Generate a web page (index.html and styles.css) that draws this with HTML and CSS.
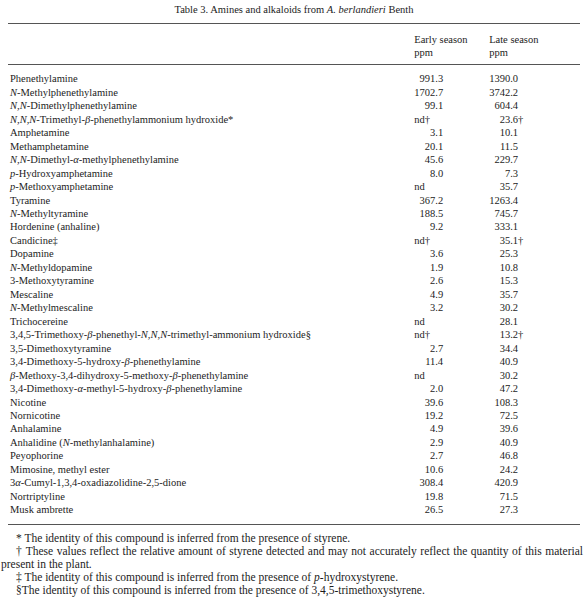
FILE: index.html
```html
<!DOCTYPE html>
<html>
<head>
<meta charset="utf-8">
<link rel="stylesheet" href="styles.css">
</head>
<body>
<div class="page">
  <p class="caption">Table 3. Amines and alkaloids from <i>A. berlandieri</i> Benth</p>
  <table class="data">
    <thead>
      <tr>
        <th class="name"></th>
        <th class="early">Early season<br>ppm</th>
        <th class="late">Late season<br>ppm</th>
      </tr>
    </thead>
    <tbody>
      <tr><td class="name">Phenethylamine</td><td class="early">991.3</td><td class="late">1390.0</td></tr>
      <tr><td class="name"><i>N</i>-Methylphenethylamine</td><td class="early">1702.7</td><td class="late">3742.2</td></tr>
      <tr><td class="name"><i>N</i>,<i>N</i>-Dimethylphenethylamine</td><td class="early">99.1</td><td class="late">604.4</td></tr>
      <tr><td class="name"><i>N</i>,<i>N</i>,<i>N</i>-Trimethyl-<i>β</i>-phenethylammonium hydroxide*</td><td class="early nd">nd†</td><td class="late">23.6<span class="dg">†</span></td></tr>
      <tr><td class="name">Amphetamine</td><td class="early">3.1</td><td class="late">10.1</td></tr>
      <tr><td class="name">Methamphetamine</td><td class="early">20.1</td><td class="late">11.5</td></tr>
      <tr><td class="name"><i>N</i>,<i>N</i>-Dimethyl-<i>α</i>-methylphenethylamine</td><td class="early">45.6</td><td class="late">229.7</td></tr>
      <tr><td class="name"><i>p</i>-Hydroxyamphetamine</td><td class="early">8.0</td><td class="late">7.3</td></tr>
      <tr><td class="name"><i>p</i>-Methoxyamphetamine</td><td class="early nd">nd</td><td class="late">35.7</td></tr>
      <tr><td class="name">Tyramine</td><td class="early">367.2</td><td class="late">1263.4</td></tr>
      <tr><td class="name"><i>N</i>-Methyltyramine</td><td class="early">188.5</td><td class="late">745.7</td></tr>
      <tr><td class="name">Hordenine (anhaline)</td><td class="early">9.2</td><td class="late">333.1</td></tr>
      <tr><td class="name">Candicine‡</td><td class="early nd">nd†</td><td class="late">35.1<span class="dg">†</span></td></tr>
      <tr><td class="name">Dopamine</td><td class="early">3.6</td><td class="late">25.3</td></tr>
      <tr><td class="name"><i>N</i>-Methyldopamine</td><td class="early">1.9</td><td class="late">10.8</td></tr>
      <tr><td class="name">3-Methoxytyramine</td><td class="early">2.6</td><td class="late">15.3</td></tr>
      <tr><td class="name">Mescaline</td><td class="early">4.9</td><td class="late">35.7</td></tr>
      <tr><td class="name"><i>N</i>-Methylmescaline</td><td class="early">3.2</td><td class="late">30.2</td></tr>
      <tr><td class="name">Trichocereine</td><td class="early nd">nd</td><td class="late">28.1</td></tr>
      <tr><td class="name">3,4,5-Trimethoxy-<i>β</i>-phenethyl-<i>N</i>,<i>N</i>,<i>N</i>-trimethyl-ammonium hydroxide§</td><td class="early nd">nd†</td><td class="late">13.2<span class="dg">†</span></td></tr>
      <tr><td class="name">3,5-Dimethoxytyramine</td><td class="early">2.7</td><td class="late">34.4</td></tr>
      <tr><td class="name">3,4-Dimethoxy-5-hydroxy-<i>β</i>-phenethylamine</td><td class="early">11.4</td><td class="late">40.9</td></tr>
      <tr><td class="name"><i>β</i>-Methoxy-3,4-dihydroxy-5-methoxy-<i>β</i>-phenethylamine</td><td class="early nd">nd</td><td class="late">30.2</td></tr>
      <tr><td class="name">3,4-Dimethoxy-<i>α</i>-methyl-5-hydroxy-<i>β</i>-phenethylamine</td><td class="early">2.0</td><td class="late">47.2</td></tr>
      <tr><td class="name">Nicotine</td><td class="early">39.6</td><td class="late">108.3</td></tr>
      <tr><td class="name">Nornicotine</td><td class="early">19.2</td><td class="late">72.5</td></tr>
      <tr><td class="name">Anhalamine</td><td class="early">4.9</td><td class="late">39.6</td></tr>
      <tr><td class="name">Anhalidine (<i>N</i>-methylanhalamine)</td><td class="early">2.9</td><td class="late">40.9</td></tr>
      <tr><td class="name">Peyophorine</td><td class="early">2.7</td><td class="late">46.8</td></tr>
      <tr><td class="name">Mimosine, methyl ester</td><td class="early">10.6</td><td class="late">24.2</td></tr>
      <tr><td class="name">3<i>α</i>-Cumyl-1,3,4-oxadiazolidine-2,5-dione</td><td class="early">308.4</td><td class="late">420.9</td></tr>
      <tr><td class="name">Nortriptyline</td><td class="early">19.8</td><td class="late">71.5</td></tr>
      <tr class="last"><td class="name">Musk ambrette</td><td class="early">26.5</td><td class="late">27.3</td></tr>
    </tbody>
  </table>
  <div class="notes">
    <p>* The identity of this compound is inferred from the presence of styrene.</p>
    <p>† These values reflect the relative amount of styrene detected and may not accurately reflect the quantity of this material present in the plant.</p>
    <p>‡ The identity of this compound is inferred from the presence of <i>p</i>-hydroxystyrene.</p>
    <p>§The identity of this compound is inferred from the presence of 3,4,5-trimethoxystyrene.</p>
  </div>
</div>
</body>
</html>
```

FILE: styles.css
```css
html, body {
  margin: 0;
  padding: 0;
  background: #ffffff;
}

.page {
  width: 572px;
  margin-left: 8px;
  font-family: "Liberation Serif", "Times New Roman", serif;
  font-size: 10.5px;
  color: #1c1c1c;
}

.caption {
  margin: 0;
  padding-top: 3px;
  line-height: 13px;
  text-align: center;
  margin-bottom: 7px;
}

.data {
  width: 572px;
  border-collapse: collapse;
  border-top: 1px solid #555555;
  border-bottom: 1px solid #555555;
}

.data th {
  font-weight: normal;
  text-align: left;
  line-height: 13px;
  padding: 8.5px 0 5.5px 0;
  border-bottom: 1px solid #555555;
  vertical-align: top;
}

.data td {
  padding: 0;
  line-height: 13.47px;
  height: 13.47px;
  white-space: nowrap;
}

.data tbody tr:first-child td {
  padding-top: 7.3px;
}

.data tbody tr.last td {
  padding-bottom: 7px;
}

.data .name {
  padding-left: 2px;
  width: 407px;
}

.data th.early {
  width: 73px;
}

.data td.early {
  text-align: right;
  padding-right: 46px;
}

.data td.early.nd {
  text-align: left;
  padding-right: 0;
}

.data td.late {
  text-align: right;
  padding-right: 62px;
}

.dg {
  display: inline-block;
  width: 0;
  overflow: visible;
}

.notes {
  padding-top: 7px;
  margin-left: -7px;
  width: 582px;
  font-size: 11.5px;
}

.notes p {
  margin: 0;
  line-height: 13px;
  text-indent: 15px;
  text-align: justify;
}
```
